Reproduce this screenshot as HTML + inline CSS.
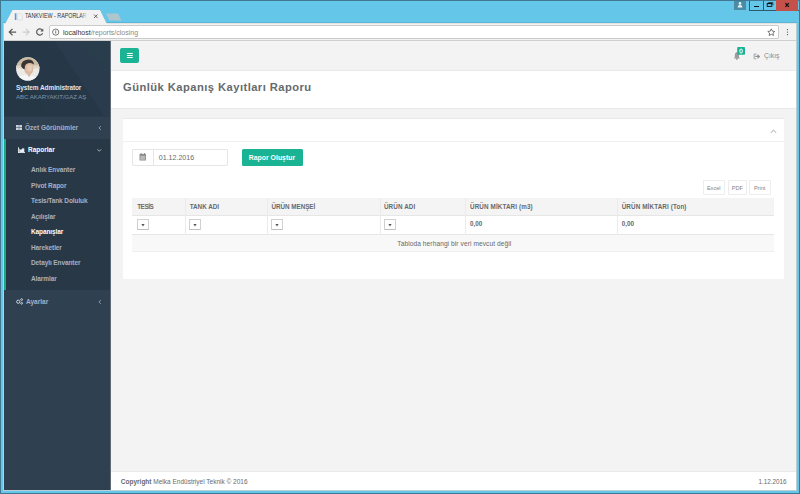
<!DOCTYPE html>
<html><head><meta charset="utf-8">
<style>
*{box-sizing:border-box}
html,body{margin:0;padding:0}
body{width:800px;height:494px;overflow:hidden;position:relative;background:#3f7890;font-family:"Liberation Sans",sans-serif;color:#676a6c}
.a{position:absolute}
.t{position:absolute;white-space:nowrap;line-height:1}
.b{font-weight:bold}
.nav{color:#a7b1c2;font-size:6.5px;font-weight:bold}
.sub{color:#a7b1c2;font-size:6.5px;font-weight:bold;letter-spacing:-0.1px}
.th{font-size:6.3px;font-weight:bold;color:#676a6c}
.sel{position:absolute;width:12px;height:11px;border:1px solid #d0d0d0;border-bottom-color:#bdbdbd;border-radius:1px;background:#fff}
.sel svg{left:0;top:0}
.vl{position:absolute;width:1px;background:#ebebeb}
.eb{position:absolute;height:15px;border:1px solid #ebedee;border-radius:1px;background:#fff}
svg{position:absolute;overflow:visible}
</style></head><body>
<!-- window frame -->
<div class="a" style="left:1px;top:1px;width:798px;height:492px;background:#64c6e9"></div>
<!-- tab -->
<div class="a" style="left:3px;top:22px;width:794px;height:1px;background:#5bb5d9"></div>


<!-- window controls -->
<div class="a" style="left:734px;top:1px;width:12px;height:9px;background:#4b8ba4"></div>
<svg style="left:734px;top:0" width="12" height="10"><circle cx="6" cy="3.4" r="1.3" fill="#e8f2f5"/><path d="M3.6 7.4 q0-2.3 2.4-2.3 q2.4 0 2.4 2.3z" fill="#e8f2f5"/></svg>
<div class="a" style="left:749px;top:1px;width:50px;height:10px;border:1px solid #2e5b6d;border-top:none;border-right:none;background:#64c6e9"></div>
<div class="a" style="left:763px;top:1px;width:1px;height:10px;background:#2e5b6d"></div>
<div class="a" style="left:776px;top:0;width:22px;height:10.5px;background:#c4514a"></div>
<div class="a" style="left:753.8px;top:5.6px;width:4.8px;height:1.3px;background:#111"></div>
<svg style="left:763px;top:0" width="13" height="11"><rect x="4.2" y="3.4" width="4.6" height="3" fill="none" stroke="#111" stroke-width="0.9"/><rect x="4.2" y="3" width="4.6" height="1.1" fill="#111"/><path d="M5.3 2.6 h4.6 v2.8" fill="none" stroke="#111" stroke-width="0.7"/></svg>
<svg style="left:776px;top:0" width="22" height="10"><path d="M9.4 3.1 l3.4 3.8 M12.8 3.1 l-3.4 3.8" stroke="#111" stroke-width="1.3"/></svg>
<!-- browser area -->
<div class="a" style="left:3px;top:23px;width:794px;height:468px;background:#b9d0d9"></div>
<div class="a" style="left:4px;top:23px;width:792px;height:17px;background:#f2f2f2;border-top:1px solid #e2e2e2"></div>
<div class="a" style="left:4px;top:40px;width:792px;height:1px;background:#cfcfcf"></div>
<svg style="left:0;top:0" width="130" height="26">
<path d="M5.5 23.2 L12.5 10 L100 10 L106.5 23.2" fill="none" stroke="#8eb3c2" stroke-width="0.5"/><path d="M4.8 24.5 L5.5 23.2 L12.5 10 L100 10 L106.5 23.2 L107.2 24.5 Z" fill="#f2f2f2"/>
<path d="M106 13.5 L118 13.5 L121.5 20.5 L109.5 20.5 Z" fill="#b0c6ce"/>
<rect x="14.8" y="13.3" width="1.6" height="6.7" fill="#5b9bd5"/>
<path d="M17.5 13.5 h3.5 l1.5 1.5 v5 h-5 z" fill="none" stroke="#d6d6d6" stroke-width="0.6"/>
<path d="M94 14.5 l3.5 3.5 M97.5 14.5 l-3.5 3.5" stroke="#555" stroke-width="0.9"/>
</svg>
<div class="t" id="tabt" style="left:25.3px;top:13px;font-size:6.7px;color:#333;transform:scaleX(0.8);transform-origin:0 0">TANKVIEW - RAPORLAR</div>
<div class="a" style="left:80px;top:12px;width:9px;height:9px;background:linear-gradient(90deg,rgba(242,242,242,0),#f2f2f2 85%)"></div>
<svg style="left:0;top:0" width="800" height="41">
<path d="M9.3 32.1 h6.8 M12.5 28.9 l-3.2 3.2 l3.2 3.2" fill="none" stroke="#5a5a5a" stroke-width="1.3"/>
<path d="M29 32.1 h-6.3 M25.9 28.9 l3.2 3.2 l-3.2 3.2" fill="none" stroke="#cdcdcd" stroke-width="1.2"/>
<path d="M42.3 30.3 A3.1 3.1 0 1 0 42.6 33.2" fill="none" stroke="#5a5a5a" stroke-width="1.2"/>
<path d="M43.3 28.6 v3 h-3 z" fill="#5a5a5a"/>
<circle cx="55.7" cy="32.1" r="3.1" fill="none" stroke="#666" stroke-width="0.9"/>
<rect x="55.3" y="31.1" width="0.9" height="2.5" fill="#666"/><rect x="55.3" y="29.8" width="0.9" height="0.8" fill="#666"/>
<path d="M771.3 28.9 l1.05 2.25 l2.45 .3 l-1.8 1.65 l.45 2.4 l-2.15 -1.2 l-2.15 1.2 l.45 -2.4 l-1.8 -1.65 l2.45 -.3 z" fill="none" stroke="#555" stroke-width="0.8"/>
<circle cx="787.5" cy="29.6" r="0.7" fill="#555"/><circle cx="787.5" cy="32.1" r="0.7" fill="#555"/><circle cx="787.5" cy="34.6" r="0.7" fill="#555"/>
</svg>
<!-- address bar -->
<div class="a" style="left:48.5px;top:25px;width:730.5px;height:13.8px;background:#fff;border:1px solid #cbcbcb;border-radius:2px"></div>
<div class="t" id="url" style="left:63px;top:29px;font-size:7px;color:#333">localhost<span style="color:#8a8a8a">/reports/closing</span></div>
<svg style="left:0;top:0" width="800" height="41">
<circle cx="55.7" cy="32.1" r="3.1" fill="none" stroke="#666" stroke-width="0.9"/>
<rect x="55.3" y="31.1" width="0.9" height="2.5" fill="#666"/><rect x="55.3" y="29.8" width="0.9" height="0.8" fill="#666"/>
<path d="M771.3 28.9 l1.05 2.25 l2.45 .3 l-1.8 1.65 l.45 2.4 l-2.15 -1.2 l-2.15 1.2 l.45 -2.4 l-1.8 -1.65 l2.45 -.3 z" fill="none" stroke="#555" stroke-width="0.8"/>
</svg>

<!-- content -->
<div class="a" style="left:4px;top:41px;width:792px;height:449px;background:#f3f3f4"></div>
<!-- sidebar -->
<div class="a" style="left:4px;top:41px;width:107px;height:449px;background:#2f4050"></div>
<svg style="left:4px;top:41px" width="107" height="75">
<rect width="107" height="75" fill="#263747"/>
<path d="M50 0 L107 0 L107 75 L100 75 Z" fill="#293b4c"/>
<path d="M70 0 L107 0 L107 30 Z" fill="#2b3e4f" opacity="0.7"/>
<path d="M0 20 Q30 35 45 75 L0 75 Z" fill="#243545" opacity="0.6"/>
</svg>
<div class="a" style="left:4px;top:139px;width:107px;height:151px;background:#293846"></div>
<div class="a" style="left:4px;top:139px;width:2px;height:151px;background:#19aa8d"></div>

<svg style="left:16px;top:57px" width="24" height="24">
<defs><clipPath id="cp"><circle cx="11.8" cy="11.9" r="11.7"/></clipPath></defs>
<g clip-path="url(#cp)">
<rect width="24" height="24" fill="#eceae7"/>
<rect width="24" height="10" fill="#cbbba2"/>
<rect x="0" y="8.5" width="24" height="3" fill="#ddd5c9"/>
<ellipse cx="12.8" cy="11.8" rx="4.6" ry="6" fill="#dbb9a1"/>
<ellipse cx="13.6" cy="11" rx="2.6" ry="3.5" fill="#e6cbb6"/>
<path d="M5.2 9.5 q-.2-6.5 7-7 q5.5 0 5.8 5 q-2.8-1.8-6-1.3 q-2.4.4-3 2.8 l-.4 3.5 q-1.8 -.6 -3.4 -3z" fill="#3a3535"/>
<path d="M0 24 q2-5.8 10.5-6.3 q9.5 .3 13.5 6.3z" fill="#f5f5f5"/>
<path d="M11.3 17.6 l1.8 2.4 l1.8-2.4z" fill="#cfae96"/>
</g>
</svg>
<div class="t b" id="sa" style="left:16px;top:84.5px;font-size:6.5px;color:#dfe4ed;letter-spacing:-0.1px">System Administrator</div>
<div class="t" id="abc" style="left:16px;top:93.8px;font-size:6.1px;color:#8095a8;letter-spacing:-0.05px">ABC AKARYAKIT/GAZ AŞ</div>

<div class="a" style="left:4px;top:116px;width:107px;height:1px;background:#2b3a49"></div>
<svg style="left:0;top:0" width="111" height="320">
<g fill="#c9d1dc"><rect x="16" y="125" width="2.8" height="2.3"/><rect x="19.2" y="125" width="2.8" height="2.3"/><rect x="16" y="127.7" width="2.8" height="2.3"/><rect x="19.2" y="127.7" width="2.8" height="2.3"/></g>
<path d="M100.8 126 l-1.8 1.9 l1.8 1.9" fill="none" stroke="#a7b1c2" stroke-width="0.8"/>
<g fill="#e8edf3"><rect x="18" y="147.3" width="0.9" height="5.7"/><rect x="18" y="152.1" width="7" height="0.9"/><path d="M19.3 152.1 V148.6 L20.9 150 L22.5 148.2 L24.3 148.6 V152.1 Z"/></g>
<path d="M97.4 149.3 l1.9 1.9 l1.9 -1.9" fill="none" stroke="#c7ced8" stroke-width="0.8"/>
<g fill="none" stroke="#c9d1dc" stroke-width="1"><circle cx="18.2" cy="301.7" r="1.6"/><circle cx="21.6" cy="299.6" r="0.9"/><circle cx="21.6" cy="303.3" r="0.9"/></g>
<path d="M100.8 300 l-1.8 1.9 l1.8 1.9" fill="none" stroke="#a7b1c2" stroke-width="0.8"/>
</svg>

<div class="t nav" id="ozet" style="left:25px;top:125px">Özet Görünümler</div>
<div class="t nav" id="rap" style="left:28px;top:147.3px;color:#fff">Raporlar</div>
<div class="t sub" style="left:31px;top:167.1px">Anlık Envanter</div>
<div class="t sub" style="left:31px;top:182.6px">Pivot Rapor</div>
<div class="t sub" style="left:31px;top:198.1px">Tesis/Tank Doluluk</div>
<div class="t sub" style="left:31px;top:213.6px">Açılışlar</div>
<div class="t sub" style="left:31px;top:229.1px;color:#fff">Kapanışlar</div>
<div class="t sub" style="left:31px;top:244.6px">Hareketler</div>
<div class="t sub" style="left:31px;top:260.1px">Detaylı Envanter</div>
<div class="t sub" style="left:31px;top:275.6px">Alarmlar</div>
<div class="t nav" id="ayar" style="left:26px;top:298.5px">Ayarlar</div>

<div class="a" style="left:110px;top:41px;width:1px;height:449px;background:#5f6b77"></div>
<!-- top navbar -->
<div class="a" style="left:111px;top:70px;width:685px;height:1px;background:#e7eaec"></div>
<div class="a" style="left:120px;top:48px;width:19px;height:15px;background:#1ab394;border-radius:2px"></div>
<svg style="left:120px;top:48px" width="19" height="15"><g fill="#fff"><rect x="6.9" y="4.95" width="5.9" height="1"/><rect x="6.9" y="7.05" width="5.9" height="1"/><rect x="6.9" y="9.05" width="5.9" height="1"/></g></svg>
<svg style="left:730px;top:44px" width="60" height="20">
<path d="M3.8 14.6 h6.2 l-1 -1.3 v-2.3 q0-2.6 -2.1-3 q-2.1 .4 -2.1 3 v2.3 z" fill="#9a9c9e"/>
<circle cx="6.9" cy="15" r="0.9" fill="#9a9c9e"/>
<rect x="7.2" y="3" width="7.8" height="7.8" rx="0.8" fill="#1ab394"/>
<path d="M26.2 10 h-2 v4.8 h2" fill="none" stroke="#9a9c9e" stroke-width="0.9"/>
<path d="M25.3 11.7 h2.2 v-1.8 l2.7 2.5 l-2.7 2.5 v-1.8 h-2.2z" fill="#8e9092"/>
</svg>
<svg style="left:730px;top:44px" width="20" height="14"><ellipse cx="11.1" cy="7.1" rx="1.3" ry="2.1" fill="none" stroke="#fff" stroke-width="1"/></svg>
<div class="t" id="cikis" style="left:764px;top:53.2px;font-size:6.8px;color:#888b8d">Çıkış</div>

<!-- page heading -->
<div class="a" style="left:111px;top:71px;width:685px;height:37.6px;background:#fff;border-bottom:1px solid #e7eaec"></div>
<div class="t b" id="head" style="left:123px;top:82px;font-size:11.2px;color:#676a6c;letter-spacing:0.45px">Günlük Kapanış Kayıtları Raporu</div>

<!-- ibox -->
<div class="a" style="left:123px;top:117.8px;width:661px;height:161.2px;background:#fff;border-top:1.5px solid #e7eaec"></div>
<div class="a" style="left:123px;top:141px;width:661px;height:1px;background:#eef0f1"></div>
<svg style="left:765px;top:125px" width="15" height="12"><path d="M5.8 7.8 l2.7 -2.7 l2.7 2.7" fill="none" stroke="#c4c4c4" stroke-width="1.1"/></svg>

<!-- input group -->
<div class="a" style="left:132px;top:149px;width:96px;height:16.5px;border:1px solid #e5e6e7;border-radius:1px"></div>
<div class="a" style="left:152.5px;top:149px;width:1px;height:16.5px;background:#e5e6e7"></div>
<svg style="left:132px;top:149px" width="20" height="16"><rect x="7.5" y="5" width="6.5" height="6.6" rx="0.5" fill="#8d8d8d"/><rect x="8.3" y="6.8" width="4.9" height="4" fill="#b9b9b9"/><rect x="8.7" y="4" width="0.9" height="1.6" fill="#777"/><rect x="11.9" y="4" width="0.9" height="1.6" fill="#777"/></svg>
<div class="t" id="date" style="left:158.8px;top:154.2px;font-size:7.05px;color:#676a6c">01.12.2016</div>
<div class="a" style="left:242px;top:149px;width:60.5px;height:16.5px;background:#1ab394;border-radius:1.5px"></div>
<div class="t b" id="btn" style="left:248.8px;top:154.8px;font-size:6.9px;color:#fff">Rapor Oluştur</div>

<!-- export buttons -->
<div class="eb" style="left:703px;top:180.3px;width:22px"></div>
<div class="eb" style="left:727.5px;top:180.3px;width:19px"></div>
<div class="eb" style="left:749.2px;top:180.3px;width:22.3px"></div>
<div class="t" style="left:706.9px;top:185.5px;font-size:5.6px;color:#808385">Excel</div>
<div class="t" style="left:731.8px;top:185.5px;font-size:5.6px;color:#808385">PDF</div>
<div class="t" style="left:753.9px;top:185.5px;font-size:5.6px;color:#808385">Print</div>

<!-- table -->
<div class="a" style="left:132px;top:197.5px;width:642px;height:18px;background:#f4f4f5;border-bottom:1.2px solid #e6e6e6"></div>
<div class="a" style="left:132px;top:215.5px;width:642px;height:19.2px;background:#fff;border-bottom:1px solid #e7e7e7"></div>
<div class="a" style="left:132px;top:234.7px;width:642px;height:17.3px;background:#f8f8f8;border-bottom:1px solid #efefef"></div>
<div class="vl" style="left:185px;top:197.5px;height:37.2px"></div>
<div class="vl" style="left:266.5px;top:197.5px;height:37.2px"></div>
<div class="vl" style="left:379.5px;top:197.5px;height:37.2px"></div>
<div class="vl" style="left:465px;top:197.5px;height:37.2px"></div>
<div class="vl" style="left:617.3px;top:197.5px;height:37.2px"></div>
<div class="t th" style="left:137.2px;top:204.1px;letter-spacing:-0.42px">TESİS</div>
<div class="t th" style="left:189.7px;top:204.1px;letter-spacing:0px">TANK ADI</div>
<div class="t th" style="left:271.4px;top:204.1px;letter-spacing:-0.02px">ÜRÜN MENŞEİ</div>
<div class="t th" style="left:383.9px;top:204.1px;letter-spacing:0.12px">ÜRÜN ADI</div>
<div class="t th" style="left:470px;top:204.1px;letter-spacing:0.12px">ÜRÜN MİKTARI (m3)</div>
<div class="t th" style="left:621.7px;top:204.1px;letter-spacing:0.12px">ÜRÜN MİKTARI (Ton)</div>
<div class="sel" style="left:137px;top:219.4px"><svg width="10" height="9"><path d="M3.4 3.9 h3.2 l-1.6 2.6z" fill="#555"/></svg></div>
<div class="sel" style="left:189px;top:219.4px"><svg width="10" height="9"><path d="M3.4 3.9 h3.2 l-1.6 2.6z" fill="#555"/></svg></div>
<div class="sel" style="left:271px;top:219.4px"><svg width="10" height="9"><path d="M3.4 3.9 h3.2 l-1.6 2.6z" fill="#555"/></svg></div>
<div class="sel" style="left:383.5px;top:219.4px"><svg width="10" height="9"><path d="M3.4 3.9 h3.2 l-1.6 2.6z" fill="#555"/></svg></div>
<div class="t th" style="left:470px;top:221px">0,00</div>
<div class="t th" style="left:621.7px;top:221px">0,00</div>
<div class="t" id="empty" style="left:397.3px;top:241px;font-size:6.6px;letter-spacing:0.08px">Tabloda herhangi bir veri mevcut değil</div>

<!-- footer -->
<div class="a" style="left:111px;top:471px;width:685px;height:19px;background:#fff;border-top:1px solid #e7eaec"></div>
<div class="t" id="copy" style="left:120.8px;top:478.5px;font-size:6.5px"><b>Copyright</b> Melka Endüstriyel Teknik © 2016</div>
<div class="t" id="fdate" style="left:758.4px;top:479.2px;font-size:6.3px">1.12.2016</div>
<!-- frame edges -->
<div class="a" style="left:3px;top:490px;width:794px;height:1px;background:#b9d0d9"></div>
</body></html>
